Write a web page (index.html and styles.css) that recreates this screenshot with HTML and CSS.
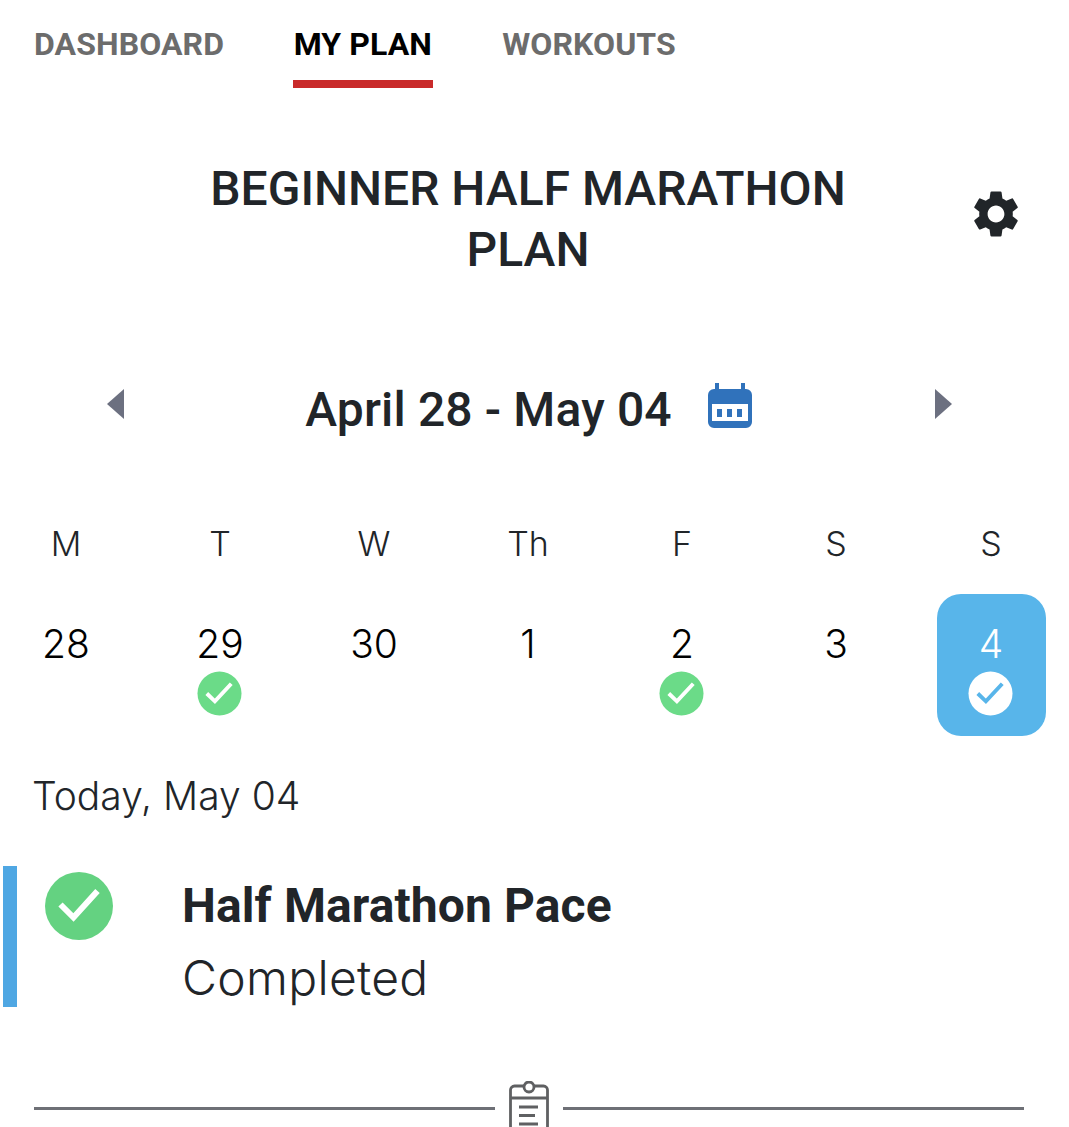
FILE: index.html
```html
<!DOCTYPE html>
<html lang="en">
<head>
<meta charset="utf-8">
<title>My Plan</title>
<link rel="stylesheet" href="styles.css">
</head>
<body>
<nav class="tabs">
  <a class="tab">DASHBOARD</a>
  <a class="tab active">MY PLAN</a>
  <a class="tab">WORKOUTS</a>
</nav>
<header class="plan-head">
  <h1 class="plan-title">BEGINNER HALF MARATHON PLAN</h1>
  <svg class="gear" viewBox="0 0 24 24"><path fill="#212529" d="M19.14 12.94c.04-.3.06-.61.06-.94 0-.32-.02-.64-.07-.94l2.03-1.58a.49.49 0 0 0 .12-.61l-1.92-3.32a.488.488 0 0 0-.59-.22l-2.39.96c-.5-.38-1.03-.7-1.62-.94l-.36-2.54a.484.484 0 0 0-.48-.41h-3.84c-.24 0-.43.17-.47.41l-.36 2.54c-.59.24-1.13.57-1.62.94l-2.39-.96c-.22-.08-.47 0-.59.22L2.74 8.87c-.12.21-.08.47.12.61l2.03 1.58c-.05.3-.09.63-.09.94s.02.64.07.94l-2.03 1.58a.49.49 0 0 0-.12.61l1.92 3.32c.12.22.37.29.59.22l2.39-.96c.5.38 1.03.7 1.62.94l.36 2.54c.05.24.24.41.48.41h3.84c.24 0 .44-.17.47-.41l.36-2.54c.59-.24 1.13-.56 1.62-.94l2.39.96c.22.08.47 0 .59-.22l1.92-3.32c.12-.22.07-.47-.12-.61l-2.01-1.58zM12 15.6c-1.98 0-3.6-1.62-3.6-3.6s1.62-3.6 3.6-3.6 3.6 1.62 3.6 3.6-1.62 3.6-3.6 3.6z"/></svg>
</header>
<section class="week-nav">
  <svg class="arrow" viewBox="0 0 18 30"><path fill="#6c7080" d="M17 0v30L0 15z"/></svg>
  <div class="week-label">
    <span class="week-text">April 28 - May 04</span>
    <svg class="cal" viewBox="0 0 44 45"><path fill="#3072bb" d="M7 0h4v6h22V0h4v6h1a6 6 0 0 1 6 6v27a6 6 0 0 1-6 6H6a6 6 0 0 1-6-6V12a6 6 0 0 1 6-6h1z"/><path fill="#fff" d="M4 21h36v17H4z"/><path fill="#3072bb" d="M9 26h5v8H9zM19 26h5v8h-5zM29 26h5v8h-5z"/></svg>
  </div>
  <svg class="arrow" viewBox="0 0 18 30"><path fill="#6c7080" d="M1 0v30l17-15z"/></svg>
</section>
<section class="calendar">
  <div class="dow">M</div><div class="dow">T</div><div class="dow">W</div><div class="dow">Th</div><div class="dow">F</div><div class="dow">S</div><div class="dow last">S</div>
  <div class="day"><span class="num">28</span></div>
  <div class="day"><span class="num">29</span><svg class="tick" viewBox="0 0 46 46"><circle cx="23" cy="23" r="22.500" fill="#6bdb88"/><path fill="none" stroke="#fff" stroke-width="4" d="M10 23l8.300 8 16.700-18"/></svg></div>
  <div class="day"><span class="num">30</span></div>
  <div class="day"><span class="num">1</span></div>
  <div class="day"><span class="num">2</span><svg class="tick" viewBox="0 0 46 46"><circle cx="23" cy="23" r="22.500" fill="#6bdb88"/><path fill="none" stroke="#fff" stroke-width="4" d="M10 23l8.300 8 16.700-18"/></svg></div>
  <div class="day"><span class="num">3</span></div>
  <div class="day last selected"><span class="num">4</span><svg class="tick" viewBox="0 0 46 46"><circle cx="23" cy="23" r="22.500" fill="#fff"/><path fill="none" stroke="#58b5ea" stroke-width="4" d="M10 23l8.300 8 16.700-18"/></svg></div>
</section>
<p class="today">Today, May 04</p>
<article class="workout">
  <svg class="workout-check" viewBox="0 0 68 68"><circle cx="34" cy="34" r="34" fill="#64d281"/><path fill="none" stroke="#fff" stroke-width="6" d="M15.500 32.500l13 13L52.500 19"/></svg>
  <div class="workout-body">
    <h2 class="workout-name">Half Marathon Pace</h2>
    <p class="workout-status">Completed</p>
  </div>
</article>
<div class="divider">
  <span class="rule"></span>
  <svg class="clip" viewBox="0 0 40 46"><g fill="none" stroke="#5f6062" stroke-width="2.800"><path d="M1.500 46V9a4 4 0 0 1 4-4h9M25.500 5h9a4 4 0 0 1 4 4v37M1.500 17h37"/><circle cx="20" cy="6" r="5"/><path d="M10 26h19M10 34.500h16M10 43h19"/></g></svg>
  <span class="rule"></span>
</div>
</body>
</html>
```
FILE: styles.css
```css
* { box-sizing: border-box; }
html, body { margin: 0; padding: 0; background: #fff; }
body { height: 1127px; overflow: hidden; color: #212529; font-family: "Inter", "Liberation Sans", sans-serif; }
.tabs { display: flex; gap: 69px; padding-left: 34px; height: 88px; }
.tab { display: block; height: 88px; padding-top: 24px; border-bottom: 8px solid transparent; font: 700 32px/40px "Roboto", sans-serif; letter-spacing: .1px; color: #6c6c6c; white-space: nowrap; }
.tab.active { color: #000; border-bottom-color: #c92a2a; padding-left: .5px; padding-right: 1.2px; }
.plan-head { display: flex; align-items: center; height: 286px; padding: 0 0 24px 200px; }
.plan-title { flex: 0 0 656px; margin: 0; text-align: center; font: 500 48px/61px "Roboto", sans-serif; color: #212529; }
.gear { flex: none; width: 56px; height: 56px; margin: -10px 0 0 112px; }
.week-nav { display: flex; align-items: center; justify-content: space-between; height: 72px; padding: 0 117px 0 107px; }
.arrow { width: 18px; height: 30px; margin-top: -12px; }
.week-label { display: flex; align-items: center; gap: 36px; margin-left: -2px; }
.week-text { font: 500 48px/60px "Roboto", sans-serif; letter-spacing: .15px; color: #212529; }
.cal { width: 44px; height: 45px; margin-top: -10px; }
.calendar { display: grid; grid-template-columns: repeat(7, 109px); column-gap: 45px; margin: 67px 0 0 11.5px; }
.dow { height: 81px; text-align: center; font: 300 34px/62px "Inter", sans-serif; color: #212529; }
.day { height: 142px; display: flex; flex-direction: column; align-items: center; padding-top: 28px; border-radius: 24px; color: #000; }
.last { transform: translateX(1px); }
.num { font: 300 39px/44px "Inter", sans-serif; }
.selected { background: #58b5ea; color: #fff; }
.tick { width: 45px; height: 45px; margin-top: 5px; margin-right: 1px; }
.today { margin: 35px 0 0 32px; font: 300 39px/50px "Inter", sans-serif; color: #212529; }
.workout { display: flex; height: 141px; margin: 45px 0 0 3px; border-left: 14px solid #4fa7e3; padding-left: 28px; }
.workout-check { width: 68px; height: 68px; margin-top: 6px; flex: none; }
.workout-body { margin-left: 69px; }
.workout-name { margin: 10px 0 0; font: 700 48px/60px "Roboto", sans-serif; letter-spacing: .1px; color: #212529; }
.workout-status { margin: 14px 0 0; font: 300 48px/56px "Inter", sans-serif; letter-spacing: .3px; color: #212529; }
.divider { display: flex; align-items: flex-start; gap: 14px; width: 990px; margin: 74px 0 0 34px; }
.rule { flex: 1; height: 3px; background: #6e7076; margin-top: 26px; }
.clip { width: 40px; height: 46px; flex: none; }
```
